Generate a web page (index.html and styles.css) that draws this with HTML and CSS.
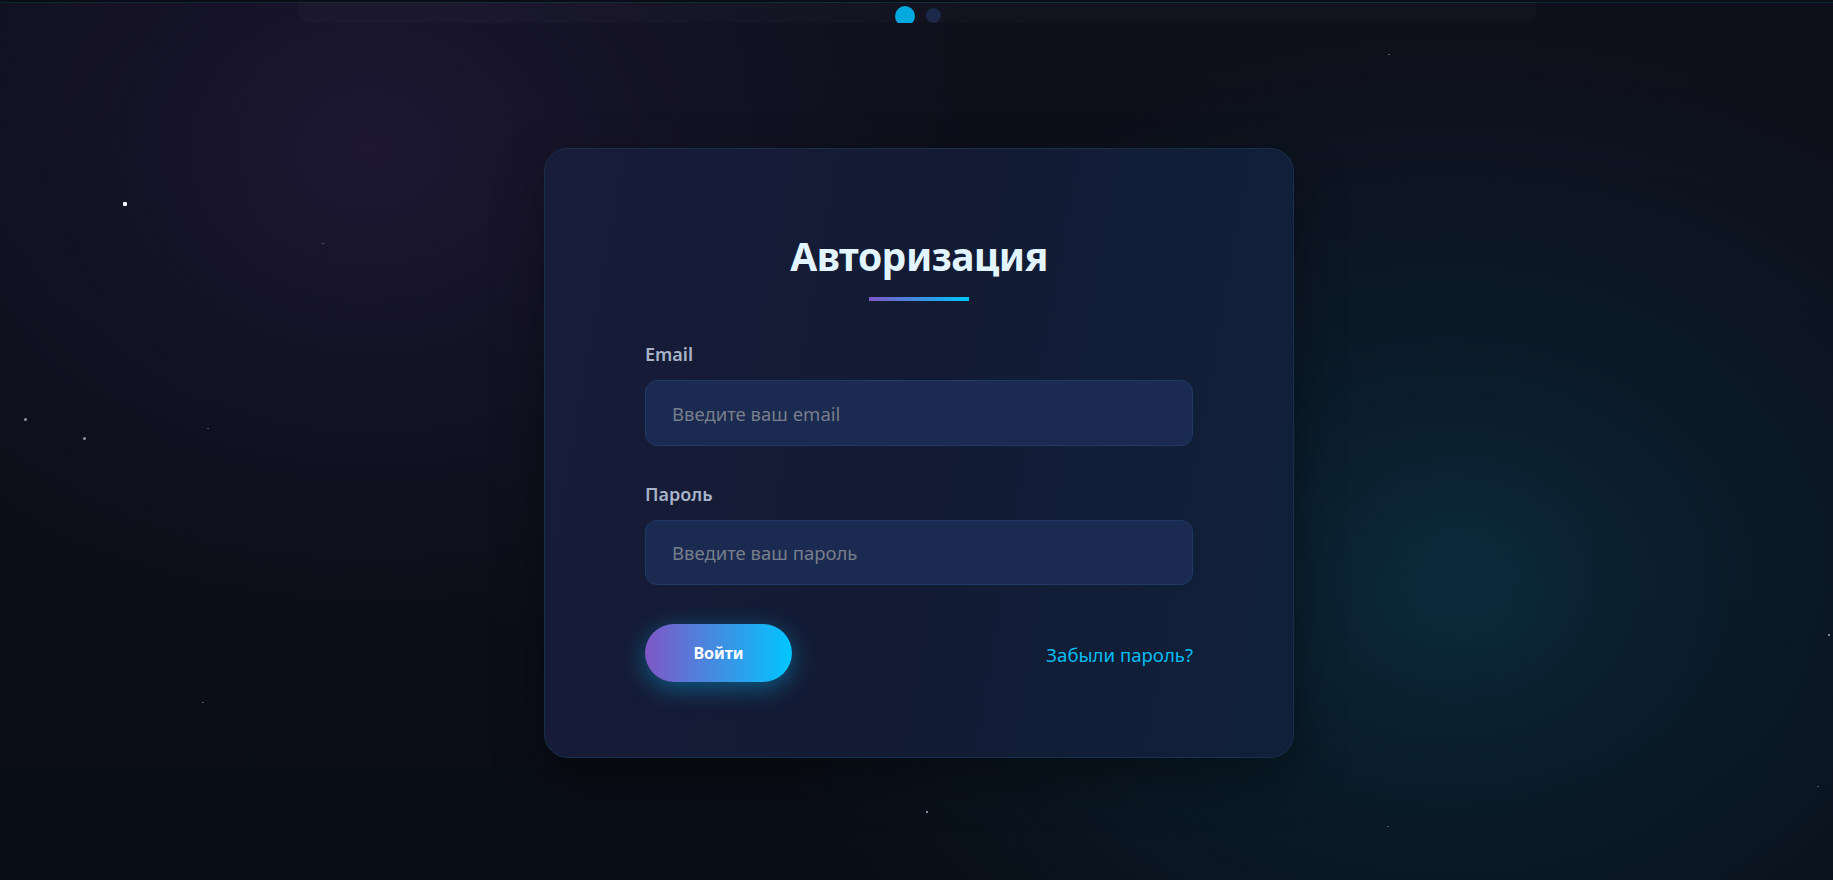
FILE: index.html
```html
<!DOCTYPE html>
<html lang="ru">
<head>
<meta charset="utf-8">
<title>Авторизация</title>
<link rel="stylesheet" href="styles.css">
</head>
<body>
<div class="page">
  <div class="stars">
    <span class="star s-big" style="left:123px;top:202px"></span>
    <span class="star s-faint" style="left:322px;top:243px"></span>
    <span class="star s-mid" style="left:24px;top:418px"></span>
    <span class="star s-mid" style="left:83px;top:437px"></span>
    <span class="star s-faint" style="left:207px;top:428px"></span>
    <span class="star s-faint" style="left:202px;top:702px"></span>
    <span class="star s-small" style="left:926px;top:811px"></span>
    <span class="star s-faint" style="left:1388px;top:54px"></span>
    <span class="star s-small" style="left:1828px;top:634px"></span>
    <span class="star s-faint" style="left:1817px;top:786px"></span>
    <span class="star s-faint" style="left:1387px;top:826px"></span>
  </div>
  <header class="topbar">
    <div class="topbar-inner">
      <span class="dot dot-active"></span>
      <span class="dot"></span>
    </div>
  </header>
  <main class="main">
    <form class="card">
      <h1 class="title">Авторизация</h1>
      <div class="title-line"></div>
      <div class="field field-first">
        <label class="label" for="email">Email</label>
        <input class="input" id="email" type="email" placeholder="Введите ваш email">
      </div>
      <div class="field field-next">
        <label class="label" for="password">Пароль</label>
        <input class="input input-pass" id="password" type="password" placeholder="Введите ваш пароль">
      </div>
      <div class="actions">
        <button class="btn" type="button">Войти</button>
        <a class="link" href="#">Забыли пароль?</a>
      </div>
    </form>
  </main>
</div>
</body>
</html>
```
FILE: styles.css
```css
* { box-sizing: border-box; }
html, body { margin: 0; padding: 0; }
body {
  width: 1833px;
  height: 880px;
  overflow: hidden;
  font-family: "Noto Sans", "Open Sans", sans-serif;
  background: #0a0d16;
}
.page {
  position: relative;
  height: 880px;
  display: flex;
  flex-direction: column;
  background:
    radial-gradient(circle at 1470px 570px, rgba(12,46,70,0.35) 0, rgba(12,46,70,0.2) 70px, rgba(12,46,70,0) 150px),
    radial-gradient(ellipse 700px 560px at 1450px 590px, rgba(10,42,58,0.9) 0%, rgba(10,38,54,0.55) 40%, rgba(10,30,44,0) 100%),
    radial-gradient(ellipse 620px 520px at 370px 150px, rgba(30,24,52,0.95) 0%, rgba(26,22,46,0.5) 45%, rgba(20,18,36,0) 100%),
    linear-gradient(180deg, #0e0f1b 0%, #0b0e18 50%, #090d15 100%);
}
.stars { position: absolute; inset: 0; pointer-events: none; }
.star { position: absolute; display: block; border-radius: 50%; }
.s-big { width: 4px; height: 4px; background: #f2f6ff; border-radius: 1px; }
.s-mid { width: 3px; height: 3px; background: #8d94a8; }
.s-small { width: 2px; height: 2px; background: #7d8596; border-radius: 0; }
.s-faint { width: 2px; height: 1px; background: #4d5466; border-radius: 0; }

.topbar {
  position: relative;
  height: 23px;
  border-top: 2px solid #0a0d14;
  box-shadow: inset 0 1px 0 #0f2738;
  padding: 0 296px 0 298px;
  flex: none;
}
.topbar-inner {
  height: 21px;
  border-radius: 0 0 14px 14px;
  background: rgba(255,255,255,0.018);
  display: flex;
  justify-content: center;
  align-items: flex-start;
  gap: 11px;
  overflow: hidden;
}
.dot {
  display: block;
  width: 15px;
  height: 15px;
  border-radius: 50%;
  background: #1b284a;
  margin-top: 6px;
}
.dot-active {
  width: 20px;
  height: 20px;
  background: #03a8de;
  margin-top: 4px;
}

.main {
  flex: 1;
  display: flex;
  justify-content: center;
  align-items: flex-start;
  padding-top: 125px;
}
.card {
  width: 750px;
  height: 610px;
  margin-left: 5px;
  border-radius: 24px;
  border: 1px solid #17304d;
  background: linear-gradient(100deg, #171c38 0%, #131b34 50%, #10203a 100%);
  box-shadow: 0 20px 50px rgba(0,0,0,0.35);
  padding: 81px 100px 0;
  display: flex;
  flex-direction: column;
}
.title {
  margin: 0;
  text-align: center;
  font-size: 39px;
  font-weight: 700;
  line-height: 52px;
  color: #e2f5ff;
  letter-spacing: -0.5px;
}
.title-line {
  align-self: center;
  width: 100px;
  height: 4px;
  margin-top: 15px;
  background: linear-gradient(90deg, #7e57c2, #00c6ff);
}
.field {
  display: flex;
  flex-direction: column;
}
.field-first { margin-top: 41px; }
.field-next { margin-top: 36px; }
.label {
  font-size: 18px;
  font-weight: 600;
  line-height: 24px;
  color: #a9b3c8;
  margin-bottom: 14px;
}
.input {
  height: 66px;
  border-radius: 12px;
  border: 1px solid #1f3a66;
  background: #1b2a50;
  padding: 0 26px;
  font-family: inherit;
  font-size: 18.5px;
  color: #dfe8f5;
  outline: none;
}
.input-pass { height: 65px; }
.input::placeholder { color: #777e8c; }
.actions {
  margin-top: 39px;
  display: flex;
  justify-content: space-between;
  align-items: center;
}
.btn {
  width: 147px;
  height: 58px;
  border: none;
  border-radius: 29px;
  background: linear-gradient(90deg, #8057c6 0%, #00c6ff 100%);
  color: #ffffff;
  font-family: inherit;
  font-size: 16px;
  font-weight: 700;
  box-shadow: 0 6px 24px rgba(0,190,255,0.4);
  cursor: pointer;
}
.link {
  font-size: 18.6px;
  color: #03bdf0;
  text-decoration: none;
  margin-top: 2px;
}
```
